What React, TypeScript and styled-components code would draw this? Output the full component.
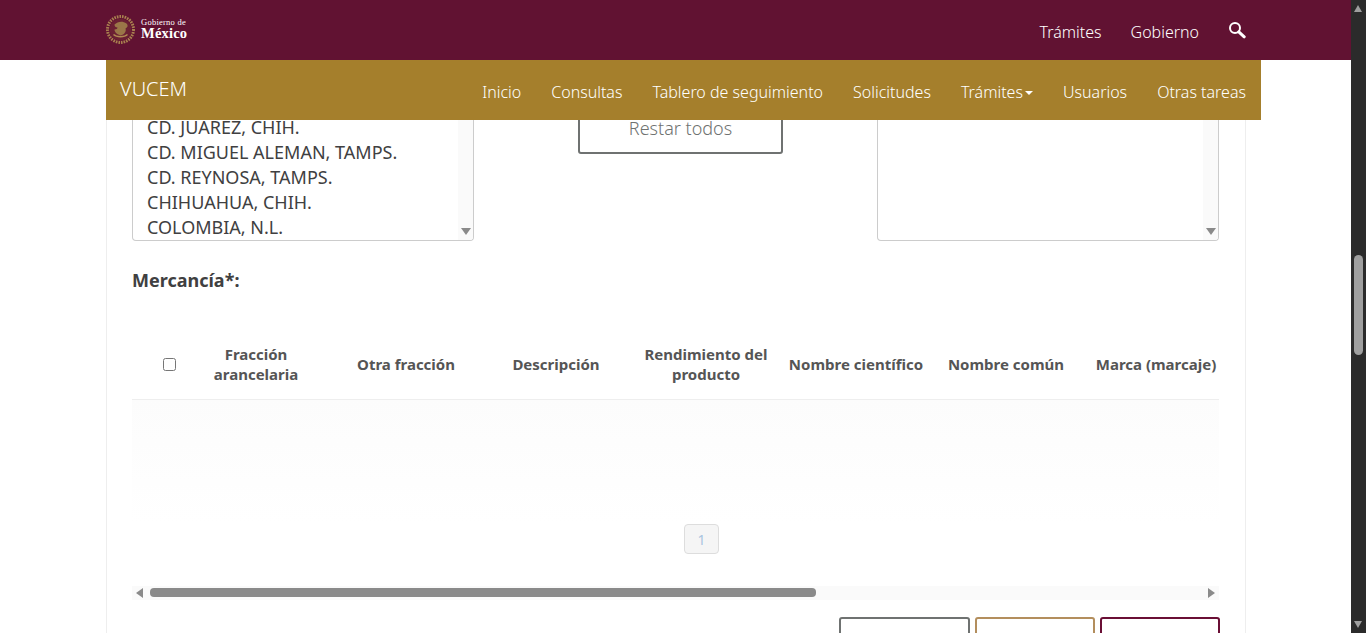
import React from 'react';
import styled, { createGlobalStyle } from 'styled-components';

const GlobalStyle = createGlobalStyle`
    html, body {
        margin: 0;
        height: 100%;
        overflow: hidden;
        background: #fff;
    }
    body {
        font-family: 'Noto Sans', 'Open Sans', sans-serif;
        color: #404041;
    }
`;

const Page = styled.div`
    display: flex;
    height: 100vh;
    overflow: hidden;
`;

const Main = styled.div`
    flex: 1;
    min-width: 0;
    display: flex;
    flex-direction: column;
`;

const TopBar = styled.header`
    flex: none;
    height: 60px;
    background: #611232;
    display: flex;
    align-items: center;
    justify-content: space-between;
    padding: 0 105px 0 105px;
`;

const Logo = styled.div`
    display: flex;
    align-items: center;
    gap: 5px;
    margin-top: -2px;
`;

const LogoText = styled.div`
    display: flex;
    flex-direction: column;
    font-family: 'Liberation Serif', serif;
    color: #fff;
`;

const LogoSmall = styled.span`
    font-size: 8.5px;
    line-height: 9px;
    letter-spacing: 0.25px;
`;

const LogoBig = styled.span`
    font-size: 14.5px;
    line-height: 13px;
    font-weight: 700;
    letter-spacing: 0.2px;
`;

const TopLinks = styled.nav`
    display: flex;
    align-items: center;
    gap: 29px;
    margin-top: 4px;
`;

const TopLink = styled.a`
    font-size: 16px;
    font-weight: 300;
    color: #fff;
`;

const SearchIcon = styled.svg`
    width: 18px;
    height: 18px;
    margin-top: -5px;
`;

const SubBar = styled.div`
    flex: none;
    box-sizing: border-box;
    width: 1155px;
    height: 60px;
    margin-left: 106px;
    padding: 0 15px 0 14px;
    background: #a57f2c;
    display: flex;
    align-items: center;
    justify-content: space-between;
`;

const Brand = styled.span`
    font-size: 20px;
    font-weight: 300;
    color: #fff;
    margin-top: -3px;
`;

const SubLinks = styled.nav`
    display: flex;
    align-items: center;
    gap: 30px;
    margin-top: 3px;
`;

const SubLink = styled.a`
    font-size: 16px;
    font-weight: 300;
    color: #fff;
    display: flex;
    align-items: center;
`;

const Caret = styled.span`
    width: 0;
    height: 0;
    margin-left: 2px;
    margin-top: 2px;
    border-top: 4px solid #fff;
    border-left: 4px solid transparent;
    border-right: 4px solid transparent;
`;

const Panel = styled.main`
    flex: 1;
    min-height: 0;
    box-sizing: border-box;
    width: 1140px;
    margin-left: 106px;
    padding: 0 26px 0 25px;
    border-left: 1px solid #eee;
    border-right: 1px solid #eee;
    overflow: hidden;
`;

const PickerRow = styled.section`
    display: grid;
    grid-template-columns: 342px 403px 342px;
    height: 121px;
`;

const ListBox = styled.div`
    position: relative;
    height: 121px;
    box-sizing: border-box;
    border: 1px solid #ccc;
    border-top: none;
    border-radius: 0 0 4px 4px;
    padding: 0 0 0 14px;
    display: flex;
    flex-direction: column;
    justify-content: flex-end;
    overflow: hidden;
    font-size: 18px;
    line-height: 25px;
    color: #404041;
`;

const ListItem = styled.div`
    flex: none;
    white-space: nowrap;
`;

const ListTrack = styled.div`
    position: absolute;
    top: 0;
    right: 0;
    bottom: 0;
    width: 15px;
    background: #fafafa;
`;

const Arrow = styled.span<{ $dir: 'up' | 'down' | 'left' | 'right' }>`
    position: absolute;
    width: 0;
    height: 0;
    ${({ $dir }) =>
        $dir === 'down' || $dir === 'up'
            ? `border-left: 5px solid transparent; border-right: 5px solid transparent;
               border-${$dir === 'down' ? 'top' : 'bottom'}: 7px solid var(--arrow, #8a8a8a);`
            : `border-top: 5px solid transparent; border-bottom: 5px solid transparent;
               border-${$dir === 'right' ? 'left' : 'right'}: 7px solid var(--arrow, #8a8a8a);`}
`;

const ListArrow = styled(Arrow)`
    right: 2px;
    bottom: 5px;
`;

const MoveColumn = styled.div`
    padding-left: 104px;
`;

const OutlineButton = styled.button`
    display: block;
    box-sizing: border-box;
    width: 205px;
    height: 53px;
    margin-top: -19px;
    padding: 0;
    background: #fff;
    border: 2px solid #6f7271;
    border-radius: 3px;
    font-family: 'Noto Sans', 'Open Sans', sans-serif;
    font-size: 18px;
    font-weight: 300;
    color: #6f7271;
`;

const SectionTitle = styled.h3`
    margin: 27px 0 42px;
    font-size: 18px;
    line-height: 24px;
    font-weight: 700;
    color: #404041;
`;

const TableHead = styled.div`
    display: grid;
    grid-template-columns: 49px repeat(7, 150px);
    box-sizing: border-box;
    height: 66px;
    padding-bottom: 6px;
    border-bottom: 1px solid #eee;
    overflow: hidden;
`;

const HeadCell = styled.div`
    display: flex;
    align-items: center;
    justify-content: center;
    padding: 0 5px;
    text-align: center;
    font-size: 15px;
    line-height: 20px;
    font-weight: 700;
    color: #555;
`;

const CheckCell = styled.div`
    display: flex;
    align-items: center;
    padding: 2px 0 0 31px;
`;

const HeadCheck = styled.input`
    width: 13px;
    height: 13px;
    margin: 0;
`;

const TableBody = styled.div`
    height: 124px;
    background: linear-gradient(#fcfcfc, #fff);
`;

const Pager = styled.div`
    display: flex;
    padding-left: 552px;
`;

const PageButton = styled.span`
    box-sizing: border-box;
    width: 35px;
    height: 30px;
    display: flex;
    align-items: center;
    justify-content: center;
    background: #f5f5f5;
    border: 1px solid #ddd;
    border-radius: 4px;
    font-size: 14px;
    color: #a8c4e0;
`;

const HScroll = styled.div`
    position: relative;
    height: 14px;
    margin-top: 32px;
    background: #fafafa;
`;

const HThumb = styled.div`
    position: absolute;
    top: 2px;
    left: 18px;
    width: 666px;
    height: 9px;
    border-radius: 4px;
    background: #8a8a8a;
`;

const HArrowLeft = styled(Arrow)`
    left: 4px;
    top: 2px;
`;

const HArrowRight = styled(Arrow)`
    right: 4px;
    top: 2px;
`;

const Actions = styled.div`
    display: flex;
    justify-content: flex-end;
    gap: 5px;
    margin-top: 17px;
    margin-right: -1px;
`;

const ActionButton = styled.button<{ $color: string; $wide?: boolean }>`
    width: ${({ $wide }) => ($wide ? '131px' : '120px')};
    height: 40px;
    padding: 0;
    background: #fff;
    border: 2px solid ${({ $color }) => $color};
    border-radius: 3px;
`;

const VScroll = styled.div`
    position: relative;
    flex: none;
    width: 15px;
    background: #2b2b2b;
    --arrow: #9f9f9f;
`;

const VThumb = styled.div`
    position: absolute;
    top: 255px;
    left: 3px;
    width: 9px;
    height: 100px;
    border-radius: 5px;
    background: #9f9f9f;
`;

const VArrowUp = styled(Arrow)`
    top: 5px;
    left: 3px;
    border-left-width: 4.5px;
    border-right-width: 4.5px;
`;

const VArrowDown = styled(Arrow)`
    bottom: 5px;
    left: 3px;
    border-left-width: 4.5px;
    border-right-width: 4.5px;
`;

const aduanas = ['CD. JUAREZ, CHIH.', 'CD. MIGUEL ALEMAN, TAMPS.', 'CD. REYNOSA, TAMPS.', 'CHIHUAHUA, CHIH.', 'COLOMBIA, N.L.'];
const columnas = [
    'Fracción arancelaria',
    'Otra fracción',
    'Descripción',
    'Rendimiento del producto',
    'Nombre científico',
    'Nombre común',
    'Marca (marcaje)',
];

const Emblem = () => (
    <svg width="31" height="31" viewBox="0 0 31 31">
        <circle cx="15.5" cy="15.5" r="13" fill="none" stroke="#a9814f" strokeWidth="3" strokeDasharray="1.6 1" />
        <circle cx="15.5" cy="15.5" r="10.8" fill="#6b2033" />
        <path d="M9.5 10.5c3-3 8-4 12-1 2 2 1 4-1 5 1 3-1 6-5 7-3-1-6-3-6-6 2 0 3-1 3-2-2 0-3-1-3-3z" fill="#9a7648" />
        <path d="M8.5 20.5c3 3 11 3 14 0" fill="none" stroke="#b08a52" strokeWidth="1.4" />
    </svg>
);

const App: React.FC = () => {
    return (
        <Page>
            <GlobalStyle />
            <Main>
                <TopBar>
                    <Logo>
                        <Emblem />
                        <LogoText>
                            <LogoSmall>Gobierno de</LogoSmall>
                            <LogoBig>México</LogoBig>
                        </LogoText>
                    </Logo>
                    <TopLinks>
                        <TopLink>Trámites</TopLink>
                        <TopLink>Gobierno</TopLink>
                        <SearchIcon viewBox="0 0 18 18">
                            <circle cx="7" cy="7" r="5" fill="none" stroke="#fff" strokeWidth="2" />
                            <path d="M10.8 10.8l5.4 5" stroke="#fff" strokeWidth="3" strokeLinecap="round" />
                        </SearchIcon>
                    </TopLinks>
                </TopBar>
                <SubBar>
                    <Brand>VUCEM</Brand>
                    <SubLinks>
                        <SubLink>Inicio</SubLink>
                        <SubLink>Consultas</SubLink>
                        <SubLink>Tablero de seguimiento</SubLink>
                        <SubLink>Solicitudes</SubLink>
                        <SubLink>
                            Trámites
                            <Caret />
                        </SubLink>
                        <SubLink>Usuarios</SubLink>
                        <SubLink>Otras tareas</SubLink>
                    </SubLinks>
                </SubBar>
                <Panel>
                    <PickerRow>
                        <ListBox>
                            {aduanas.map((aduana) => (
                                <ListItem key={aduana}>{aduana}</ListItem>
                            ))}
                            <ListTrack>
                                <ListArrow $dir="down" />
                            </ListTrack>
                        </ListBox>
                        <MoveColumn>
                            <OutlineButton>Restar todos</OutlineButton>
                        </MoveColumn>
                        <ListBox>
                            <ListTrack>
                                <ListArrow $dir="down" />
                            </ListTrack>
                        </ListBox>
                    </PickerRow>
                    <SectionTitle>Mercancía*:</SectionTitle>
                    <TableHead>
                        <CheckCell>
                            <HeadCheck type="checkbox" />
                        </CheckCell>
                        {columnas.map((columna) => (
                            <HeadCell key={columna}>{columna}</HeadCell>
                        ))}
                    </TableHead>
                    <TableBody />
                    <Pager>
                        <PageButton>1</PageButton>
                    </Pager>
                    <HScroll>
                        <HArrowLeft $dir="left" />
                        <HThumb />
                        <HArrowRight $dir="right" />
                    </HScroll>
                    <Actions>
                        <ActionButton $color="#6f7271" $wide />
                        <ActionButton $color="#b38e5d" />
                        <ActionButton $color="#6a0f35" />
                    </Actions>
                </Panel>
            </Main>
            <VScroll>
                <VArrowUp $dir="up" />
                <VThumb />
                <VArrowDown $dir="down" />
            </VScroll>
        </Page>
    );
};

export default App;
